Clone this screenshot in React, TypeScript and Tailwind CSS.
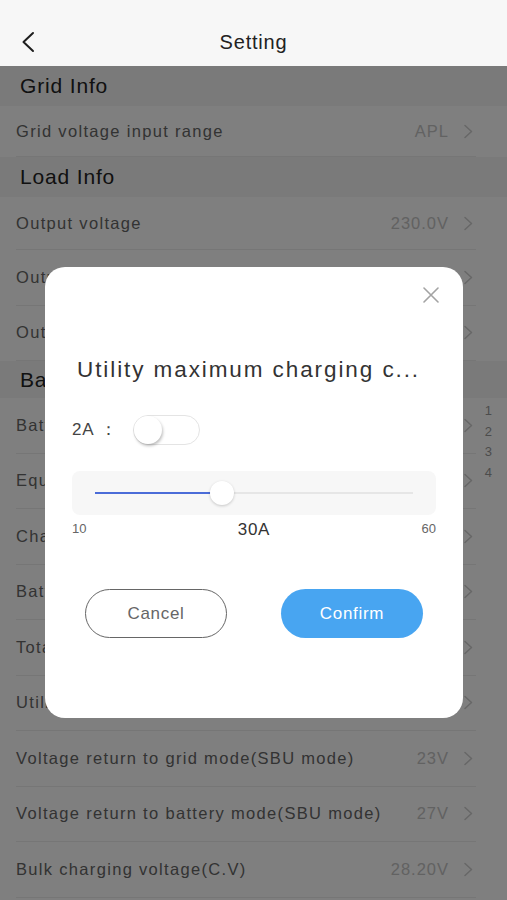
import type { FC } from 'react';

const font = { fontFamily: '"Liberation Sans", Arial, sans-serif' };

type Row = { label: string; value?: string };

const Chevron: FC = () => (
  <svg width="11" height="15" viewBox="0 0 11 15" fill="none" className="shrink-0">
    <path d="M2 1.5 L8.5 7.5 L2 13.5" stroke="#cfcfcf" strokeWidth="1.6" strokeLinecap="round" strokeLinejoin="round" />
  </svg>
);

const SectionHeader: FC<{ title: string; h: string }> = ({ title, h }) => (
  <div className={`flex items-center bg-[#f5f5f5] pl-[20px] text-[21px] tracking-[0.04em] text-[#222] ${h}`}>{title}</div>
);

const SettingRow: FC<Row & { h?: string }> = ({ label, value, h = 'h-[55.5px]' }) => (
  <div className={`ml-[16px] mr-[31px] flex items-center justify-between border-b border-[#ececec] ${h}`}>
    <span className="text-[16.5px] tracking-[0.08em] text-[#666]">{label}</span>
    <span className="flex items-center gap-[14px] pr-[2px]">
      {value && <span className="text-[16.5px] tracking-[0.06em] text-[#c4c4c4]">{value}</span>}
      <Chevron />
    </span>
  </div>
);

const batteryRows: Row[] = [
  { label: 'Battery type', value: 'AGM' },
  { label: 'Equalization mode', value: 'Off' },
  { label: 'Charging source priority', value: 'SNU' },
  { label: 'Battery under voltage', value: '21V' },
  { label: 'Total charging current', value: '60A' },
  { label: 'Utility maximum charging current', value: '30A' },
  { label: 'Voltage return to grid mode(SBU mode)', value: '23V' },
  { label: 'Voltage return to battery mode(SBU mode)', value: '27V' },
  { label: 'Bulk charging voltage(C.V)', value: '28.20V' },
];

const Dialog: FC = () => (
  <div className="absolute left-[45px] top-[267px] flex h-[451px] w-[418px] flex-col rounded-[20px] bg-white">
    <div className="flex justify-end pr-[24px] pt-[20px]">
      <svg width="16" height="16" viewBox="0 0 16 16" fill="none">
        <path d="M1 1 L15 15 M15 1 L1 15" stroke="#a3a3a3" strokeWidth="1.6" strokeLinecap="round" />
      </svg>
    </div>
    <div className="mt-[52px] pl-[32px] text-[22.5px] leading-[30px] tracking-[0.085em] text-[#333]">
      Utility maximum charging c...
    </div>
    <div className="mt-[30px] flex h-[30px] items-center pl-[27px]">
      <span className="text-[17px] tracking-[0.04em] text-[#444]">2A</span>
      <span className="ml-[6px] w-[33px] text-[17px] text-[#444]">：</span>
      <span className="flex h-[30px] w-[67px] items-center rounded-full border border-[#e4e4e4] bg-white">
        <span className="h-[28px] w-[28px] rounded-full bg-white shadow-[1px_2px_3px_rgba(0,0,0,0.25)]" />
      </span>
    </div>
    <div className="mx-[27px] mt-[26px] flex h-[44px] items-center rounded-[8px] bg-[#f7f7f7] px-[23px]">
      <div className="relative h-[2px] w-full bg-[#e6e6e6]">
        <div className="h-[2px] w-[127px] bg-[#4b6cd8]" />
        <div className="absolute left-[115px] top-[-11px] h-[24px] w-[24px] rounded-full bg-white shadow-[0_1px_3px_rgba(0,0,0,0.2)]" />
      </div>
    </div>
    <div className="mt-[5px] flex h-[20px] items-start justify-between px-[27px]">
      <span className="text-[13px] leading-[18px] text-[#666]">10</span>
      <span className="text-[17px] leading-[20px] tracking-[0.04em] text-[#333]">30A</span>
      <span className="text-[13px] leading-[18px] text-[#666]">60</span>
    </div>
    <div className="mt-[49px] flex justify-between px-[40px]">
      <button className="flex h-[49px] w-[142px] items-center justify-center rounded-full border border-[#666] text-[17px] tracking-[0.04em] text-[#666]">
        Cancel
      </button>
      <button className="flex h-[49px] w-[142px] items-center justify-center rounded-full bg-[#48a5f1] text-[17px] tracking-[0.04em] text-white">
        Confirm
      </button>
    </div>
  </div>
);

export default function App() {
  return (
    <div className="relative h-[900px] w-full overflow-hidden bg-white" style={font}>
      <div className="flex h-[66px] items-center bg-[#f7f7f7] pt-[18px]">
        <div className="flex w-[60px] justify-center">
          <svg width="14" height="22" viewBox="0 0 14 22" fill="none" className="-ml-[4px]">
            <path d="M12 2 L2.5 11 L12 20" stroke="#1e1e1e" strokeWidth="2" strokeLinecap="round" strokeLinejoin="round" />
          </svg>
        </div>
        <div className="flex-1 pr-[60px] text-center text-[20px] tracking-[0.04em] text-[#222]">Setting</div>
      </div>

      <SectionHeader title="Grid Info" h="h-[40px]" />
      <SettingRow label="Grid voltage input range" value="APL" h="h-[51px]" />
      <SectionHeader title="Load Info" h="h-[40px]" />
      <SettingRow label="Output voltage" value="230.0V" h="h-[53px]" />
      <SettingRow label="Output frequency" value="50Hz" />
      <SettingRow label="Output source priority" value="SBU" />
      <SectionHeader title="Battery Info" h="h-[37px]" />
      {batteryRows.map((r) => (
        <SettingRow key={r.label} label={r.label} value={r.value} />
      ))}

      <div className="absolute right-[15px] top-[402px] flex flex-col items-center gap-[3.5px] text-[13px] leading-[17px] text-[#999]">
        <span>1</span>
        <span>2</span>
        <span>3</span>
        <span>4</span>
      </div>

      <div className="absolute inset-x-0 bottom-0 top-[66px] bg-black/50" />
      <Dialog />
    </div>
  );
}
